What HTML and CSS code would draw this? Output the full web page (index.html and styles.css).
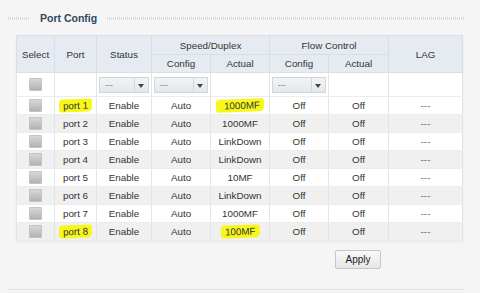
FILE: index.html
```html
<!DOCTYPE html>
<html lang="en">
<head>
    <meta charset="UTF-8">
    <meta name="viewport" content="width=device-width, initial-scale=1.0">
    <title>Port Config</title>
    <link rel="stylesheet" href="styles.css">
</head>
<body>
    <div class="panel">
        <div class="panel-title">
            <span class="title-line short"></span>
            <h1>Port Config</h1>
            <span class="title-line"></span>
        </div>

        <table class="port-table">
            <colgroup>
                <col style="width:38px">
                <col style="width:42px">
                <col style="width:55px">
                <col style="width:59px">
                <col style="width:59px">
                <col style="width:59px">
                <col style="width:60px">
                <col style="width:74px">
            </colgroup>
            <thead>
                <tr class="head-top">
                    <th rowspan="2">Select</th>
                    <th rowspan="2">Port</th>
                    <th rowspan="2">Status</th>
                    <th colspan="2">Speed/Duplex</th>
                    <th colspan="2">Flow Control</th>
                    <th rowspan="2">LAG</th>
                </tr>
                <tr class="head-sub">
                    <th>Config</th>
                    <th>Actual</th>
                    <th>Config</th>
                    <th>Actual</th>
                </tr>
            </thead>
            <tbody>
                <tr class="filter-row">
                    <td><span class="check"></span></td>
                    <td></td>
                    <td><div class="dropdown"><span class="dd-value">---</span><span class="dd-arrow"></span></div></td>
                    <td><div class="dropdown"><span class="dd-value">---</span><span class="dd-arrow"></span></div></td>
                    <td></td>
                    <td><div class="dropdown"><span class="dd-value">---</span><span class="dd-arrow"></span></div></td>
                    <td></td>
                    <td></td>
                </tr>
                <tr>
                    <td><span class="check"></span></td>
                    <td><span class="mark">port 1</span></td>
                    <td>Enable</td><td>Auto</td>
                    <td><span class="mark wide">1000MF</span></td>
                    <td>Off</td><td>Off</td><td class="lag">---</td>
                </tr>
                <tr>
                    <td><span class="check"></span></td>
                    <td>port 2</td><td>Enable</td><td>Auto</td><td>1000MF</td>
                    <td>Off</td><td>Off</td><td class="lag">---</td>
                </tr>
                <tr>
                    <td><span class="check"></span></td>
                    <td>port 3</td><td>Enable</td><td>Auto</td><td>LinkDown</td>
                    <td>Off</td><td>Off</td><td class="lag">---</td>
                </tr>
                <tr>
                    <td><span class="check"></span></td>
                    <td>port 4</td><td>Enable</td><td>Auto</td><td>LinkDown</td>
                    <td>Off</td><td>Off</td><td class="lag">---</td>
                </tr>
                <tr>
                    <td><span class="check"></span></td>
                    <td>port 5</td><td>Enable</td><td>Auto</td><td>10MF</td>
                    <td>Off</td><td>Off</td><td class="lag">---</td>
                </tr>
                <tr>
                    <td><span class="check"></span></td>
                    <td>port 6</td><td>Enable</td><td>Auto</td><td>LinkDown</td>
                    <td>Off</td><td>Off</td><td class="lag">---</td>
                </tr>
                <tr>
                    <td><span class="check"></span></td>
                    <td>port 7</td><td>Enable</td><td>Auto</td><td>1000MF</td>
                    <td>Off</td><td>Off</td><td class="lag">---</td>
                </tr>
                <tr>
                    <td><span class="check"></span></td>
                    <td><span class="mark">port 8</span></td>
                    <td>Enable</td><td>Auto</td>
                    <td><span class="mark">100MF</span></td>
                    <td>Off</td><td>Off</td><td class="lag">---</td>
                </tr>
            </tbody>
        </table>

        <div class="actions">
            <button type="button" class="btn">Apply</button>
        </div>
    </div>
</body>
</html>
```

FILE: styles.css
```css
body {
    font-family: "Liberation Sans", Arial, sans-serif;
    background-color: #f5f5f5;
    color: #333;
    margin: 0;
}
.panel {
    width: 457px;
    margin-left: 8px;
    padding-top: 11px;
    border-bottom: 1px solid #e0e0e0;
    height: 290px;
    box-sizing: border-box;
}
.panel-title {
    display: flex;
    align-items: center;
    height: 14px;
}
.panel-title h1 {
    font-size: 10.5px;
    font-weight: bold;
    color: #2f4a60;
    margin: 0 10px;
    white-space: nowrap;
}
.title-line {
    flex: 1;
    height: 3px;
    background: repeating-linear-gradient(90deg, #d5dbe2 0 1px, transparent 1px 2px);
}
.title-line.short {
    flex: 0 0 22px;
}
.port-table {
    margin: 10px 0 0 8px;
    width: 446px;
    table-layout: fixed;
    border-collapse: collapse;
    border: 1px solid #dfe4e9;
    background-color: #fff;
    font-size: 9.8px;
    box-shadow: 0 1px 2px rgba(0,0,0,0.06);
}
.port-table th {
    background-color: #e5ebf1;
    font-weight: normal;
    color: #333;
    border: 1px solid #d8dfe6;
    padding: 0;
    text-align: center;
}
.head-top th {
    height: 18px;
}
.head-sub th {
    height: 17px;
}
.port-table td {
    height: 17px;
    padding: 0;
    text-align: center;
    border-left: 1px solid #e4e4e4;
    border-right: 1px solid #e4e4e4;
    border-bottom: 1px solid #ececec;
    white-space: nowrap;
}
.port-table tbody tr:nth-child(odd) td {
    background-color: #f0f0f0;
}
.port-table tbody tr.filter-row td {
    height: 23px;
    background-color: #fff;
}
.port-table tbody tr:nth-child(even) td {
    background-color: #fff;
}
.lag {
    color: #666;
}
.check {
    display: inline-block;
    width: 11px;
    height: 11px;
    vertical-align: middle;
    border: 1px solid #c4c4c4;
    border-radius: 1px;
    background: linear-gradient(#d8d8d8, #b2b2b2);
}
.dropdown {
    display: flex;
    height: 16px;
    margin: 0 2px;
    border: 1px solid #cfd6dc;
    background: linear-gradient(#f1f4f6, #e3e8ec);
    box-sizing: border-box;
    text-align: left;
}
.dd-value {
    flex: 1;
    padding-left: 5px;
    font-size: 8px;
    line-height: 13px;
    color: #666;
}
.dd-arrow {
    width: 13px;
    border-left: 1px solid #cfd6dc;
    position: relative;
}
.dd-arrow::after {
    content: "";
    position: absolute;
    left: 3px;
    top: 6px;
    border-left: 3px solid transparent;
    border-right: 3px solid transparent;
    border-top: 4px solid #444;
}
.mark {
    display: inline-block;
    background-color: #f7f71c;
    padding: 0 4px;
    border-radius: 4px 2px 5px 2px;
    line-height: 13px;
    transform: rotate(-2deg);
}
.mark.wide {
    padding: 0 4px 0 8px;
}
.actions {
    display: flex;
    justify-content: flex-end;
    padding-right: 84px;
    margin-top: 9px;
}
.btn {
    font-family: inherit;
    font-size: 10px;
    color: #222;
    width: 46px;
    height: 19px;
    padding: 0;
    border: 1px solid #c6c6c6;
    border-radius: 2px;
    background: linear-gradient(#f9f9f9, #e6e6e6);
    cursor: pointer;
}
```
